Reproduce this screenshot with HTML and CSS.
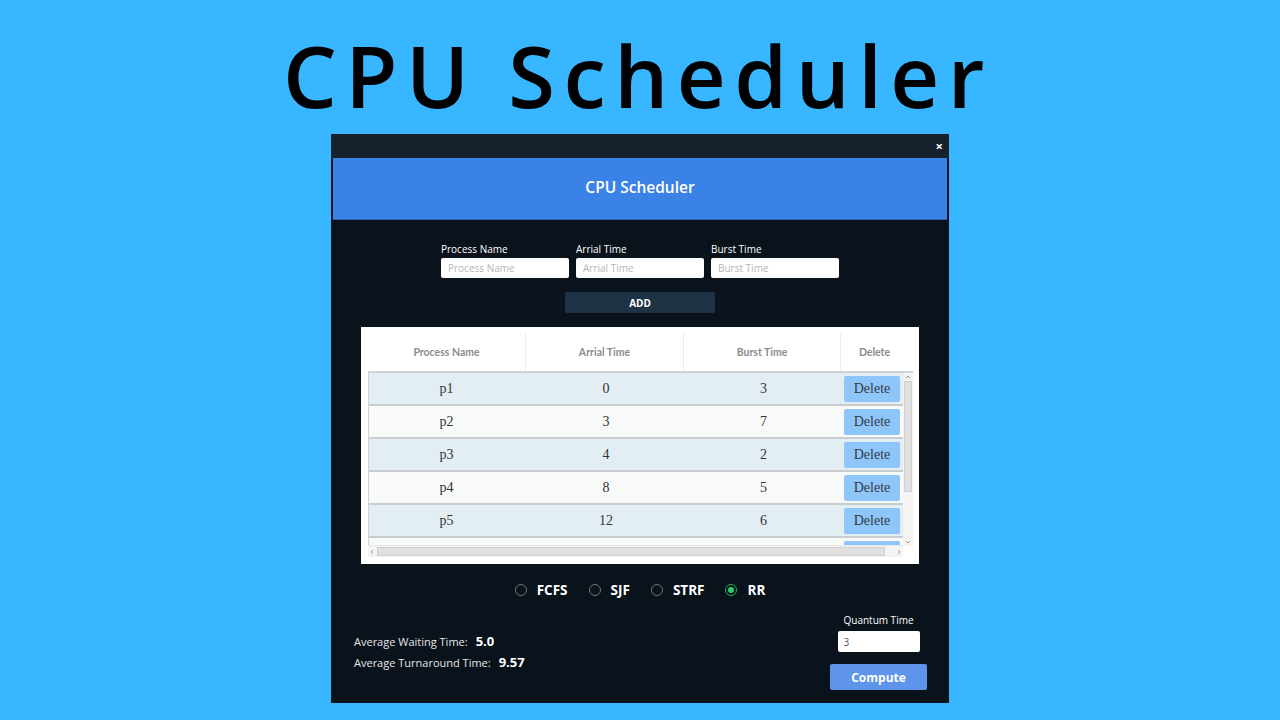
FILE: index.html
```html
<!DOCTYPE html>
<html>
<head>
<meta charset="utf-8">
<link rel="stylesheet" href="styles.css">
</head>
<body>
<header class="hero">
  <h1 class="hero-title">CPU Scheduler</h1>
</header>
<main class="window">
  <div class="titlebar"><span class="close">×</span></div>
  <div class="app-header"><h2 class="app-title">CPU Scheduler</h2></div>

  <section class="form">
    <div class="fields">
      <label class="field"><span class="field-label">Process Name</span><input class="field-input" placeholder="Process Name"></label>
      <label class="field"><span class="field-label">Arrial Time</span><input class="field-input" placeholder="Arrial Time"></label>
      <label class="field"><span class="field-label">Burst Time</span><input class="field-input" placeholder="Burst Time"></label>
    </div>
    <button class="add-btn">ADD</button>
  </section>

  <section class="table-card">
    <div class="thead">
      <div class="th c1">Process Name</div>
      <div class="th c2">Arrial Time</div>
      <div class="th c3">Burst Time</div>
      <div class="th c4">Delete</div>
    </div>
    <div class="tbody-wrap">
      <div class="tbody-main">
        <div class="tbody">
          <div class="tr odd"><div class="td c1">p1</div><div class="td c2">0</div><div class="td c3">3</div><div class="td c4"><button class="del">Delete</button></div></div>
          <div class="tr"><div class="td c1">p2</div><div class="td c2">3</div><div class="td c3">7</div><div class="td c4"><button class="del">Delete</button></div></div>
          <div class="tr odd"><div class="td c1">p3</div><div class="td c2">4</div><div class="td c3">2</div><div class="td c4"><button class="del">Delete</button></div></div>
          <div class="tr"><div class="td c1">p4</div><div class="td c2">8</div><div class="td c3">5</div><div class="td c4"><button class="del">Delete</button></div></div>
          <div class="tr odd"><div class="td c1">p5</div><div class="td c2">12</div><div class="td c3">6</div><div class="td c4"><button class="del">Delete</button></div></div>
          <div class="tr"><div class="td c1"></div><div class="td c2"></div><div class="td c3"></div><div class="td c4"><button class="del"></button></div></div>
        </div>
        <div class="hscroll">
          <svg class="harrow" width="8" height="10" viewBox="0 0 8 10"><path d="M5 3 L3 5 L5 7" fill="none" stroke="#a0a0a0" stroke-width="1"/></svg>
          <div class="hthumb"></div>
          <svg class="harrow" width="8" height="10" viewBox="0 0 8 10"><path d="M3 3 L5 5 L3 7" fill="none" stroke="#a0a0a0" stroke-width="1"/></svg>
        </div>
      </div>
      <div class="vscroll">
        <svg class="varrow" width="10" height="8" viewBox="0 0 10 8"><path d="M3 5 L5 3 L7 5" fill="none" stroke="#9a9a9a" stroke-width="1"/></svg>
        <div class="vthumb"></div>
        <div class="vfill"></div>
        <svg class="varrow" width="10" height="8" viewBox="0 0 10 8"><path d="M3 3 L5 5 L7 3" fill="none" stroke="#9a9a9a" stroke-width="1"/></svg>
      </div>
    </div>
  </section>

  <section class="algos">
    <label class="radio"><span class="dot"></span>FCFS</label>
    <label class="radio"><span class="dot"></span>SJF</label>
    <label class="radio"><span class="dot"></span>STRF</label>
    <label class="radio checked"><span class="dot"></span>RR</label>
  </section>

  <section class="bottom">
    <div class="stats">
      <div class="stat">Average Waiting Time:<b class="stat-val">5.0</b></div>
      <div class="stat">Average Turnaround Time:<b class="stat-val">9.57</b></div>
    </div>
    <div class="quantum">
      <span class="q-label">Quantum Time</span>
      <input class="q-input" value="3">
      <button class="compute">Compute</button>
    </div>
  </section>
</main>
</body>
</html>
```

FILE: styles.css
```css
* { box-sizing: border-box; }
html, body { margin: 0; padding: 0; }
body {
  width: 1280px;
  height: 720px;
  overflow: hidden;
  background: #38b6ff;
  font-family: "Open Sans", "Noto Sans", sans-serif;
}
.hero {
  height: 134px;
  display: flex;
  align-items: center;
  justify-content: center;
}
.hero-title {
  margin: 0;
  font-family: "Open Sans", "Noto Sans", sans-serif;
  font-weight: 600;
  font-size: 85px;
  letter-spacing: 8.5px;
  color: #000;
  line-height: 1;
  padding-top: 16px;
  padding-right: 4px;
}
.window {
  width: 618px;
  height: 569px;
  margin: 0 auto;
  background: #0a121b;
  display: flex;
  flex-direction: column;
}
.titlebar {
  height: 24px;
  background: #17212b;
  display: flex;
  align-items: center;
  justify-content: flex-end;
  padding-right: 6px;
}
.close {
  color: #fff;
  font-weight: 700;
  font-size: 13px;
  line-height: 1;
}
.app-header {
  height: 62px;
  margin: 0 2px;
  background: #3b82e6;
  border-bottom: 1px solid #2c62ad;
  display: flex;
  align-items: center;
  justify-content: center;
  padding-bottom: 4px;
}
.app-title {
  margin: 0;
  color: #fff;
  font-size: 15.5px;
  font-weight: 600;
}
.form {
  padding-top: 23px;
  display: flex;
  flex-direction: column;
  align-items: center;
}
.fields {
  display: flex;
  gap: 7px;
}
.field {
  display: flex;
  flex-direction: column;
  gap: 2px;
}
.field-label {
  color: #fff;
  font-size: 10px;
  line-height: 13px;
}
.field-input {
  width: 128px;
  height: 20px;
  border: none;
  border-radius: 2px;
  background: #fff;
  padding: 0 7px;
  font-family: inherit;
  font-size: 10px;
  outline: none;
}
.field-input::placeholder { color: #b5b5b5; }
.add-btn {
  margin-top: 14px;
  width: 150px;
  height: 21px;
  border: none;
  border-radius: 2px;
  background: #1f3346;
  color: #fff;
  font-family: inherit;
  font-weight: 700;
  font-size: 10px;
}
.table-card {
  margin: 14px 30px 0;
  height: 237px;
  background: #fff;
  padding: 6px 6px 7px 7px;
  display: flex;
  flex-direction: column;
}
.thead {
  display: flex;
  height: 38px;
  width: 540px;
  flex: none;
}
.th {
  display: flex;
  align-items: center;
  justify-content: center;
  color: #8c8c8c;
  font-family: "Lato", sans-serif;
  font-weight: 700;
  font-size: 10.5px;
  border-right: 1px solid #ececec;
}
.th.c4 { border-right: none; }
.c1 { width: 158px; }
.c2 { width: 158px; }
.c3 { width: 157px; }
.c4 { flex: 1; }
.tbody-wrap {
  display: flex;
  height: 186px;
  border-top: 2px solid #cfd3d6;
}
.tbody-main {
  width: 535px;
  display: flex;
  flex-direction: column;
}
.tbody {
  height: 172px;
  overflow: hidden;
  border-left: 1px solid #cfd3d6;
}
.tr {
  display: flex;
  height: 33px;
  background: #f8f9f9;
  border-bottom: 2px solid #c9cdd0;
}
.tr.odd { background: #e3eef4; }
.td {
  display: flex;
  align-items: center;
  justify-content: center;
  font-family: "Liberation Serif", serif;
  font-size: 14px;
  color: #333;
}
.c1.td { padding-right: 3px; }
.td.c4 { justify-content: flex-start; padding-left: 2px; }
.del {
  width: 56px;
  height: 26px;
  border: none;
  border-radius: 2px;
  background: #8fc6fa;
  color: #333a44;
  font-family: "Liberation Serif", serif;
  font-size: 14px;
  padding: 0;
}
.hscroll {
  height: 12px;
  display: flex;
  align-items: center;
  background: #f4f4f4;
  border-top: 1px solid #e6e6e6;
}
.harrow { flex: none; }
.hthumb {
  flex: 1;
  height: 9px;
  background: #e0e0e0;
  border: 1px solid #d0d0d0;
  margin: 0 10px 0 1px;
}
.vscroll {
  width: 10px;
  height: 173px;
  background: #f4f4f4;
  display: flex;
  flex-direction: column;
  align-items: center;
}
.varrow { flex: none; }
.vthumb {
  width: 8px;
  height: 111px;
  background: #e0e0e0;
  border: 1px solid #d0d0d0;
}
.vfill { flex: 1; }
.algos {
  margin-top: 16px;
  height: 20px;
  display: flex;
  justify-content: center;
  align-items: center;
  gap: 21px;
  padding-left: 0;
}
.radio {
  display: flex;
  align-items: center;
  gap: 10px;
  color: #fff;
  font-weight: 700;
  font-size: 13.5px;
}
.dot {
  width: 12px;
  height: 12px;
  border-radius: 50%;
  border: 1.5px solid #6e7378;
  display: flex;
  align-items: center;
  justify-content: center;
}
.radio.checked .dot { border-color: #27ae60; }
.radio.checked .dot::after {
  content: "";
  width: 6px;
  height: 6px;
  border-radius: 50%;
  background: #2ecc71;
}
.bottom {
  flex: 1;
  display: flex;
  justify-content: space-between;
  padding: 14px 22px 12px 23px;
}
.stats {
  align-self: flex-end;
  margin-bottom: 18px;
  display: flex;
  flex-direction: column;
}
.stat {
  color: #e6e6e6;
  font-size: 11px;
  line-height: 21px;
}
.stat-val {
  color: #fff;
  font-weight: 700;
  font-size: 13px;
  margin-left: 8px;
}
.quantum {
  display: flex;
  flex-direction: column;
  align-items: center;
}
.q-label {
  color: #fff;
  font-size: 10px;
  line-height: 13px;
}
.q-input {
  margin-top: 4px;
  width: 82px;
  height: 21px;
  border: none;
  border-radius: 2px;
  padding: 0 6px;
  font-family: inherit;
  font-size: 10px;
  color: #555;
  outline: none;
}
.compute {
  margin-top: 12px;
  width: 97px;
  height: 26px;
  border: none;
  border-radius: 2px;
  background: #5e94ea;
  color: #fff;
  font-family: inherit;
  font-weight: 700;
  font-size: 12px;
}
```
